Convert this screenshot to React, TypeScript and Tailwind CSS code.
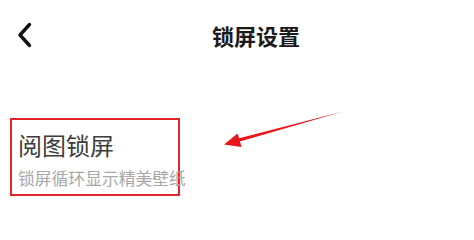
import React from "react";

const font = { fontFamily: '"Noto Sans CJK SC", "Noto Sans", sans-serif' };

const App: React.FC = () => {
  return (
    <div className="relative w-[474px] h-[240px] bg-white overflow-hidden" style={font}>
      {/* header */}
      <div className="flex items-center h-[70px]">
        <svg className="ml-[17px]" width="15" height="26" viewBox="0 0 15 26" fill="none">
          <path d="M12.5 2.5 L3 13 L12.5 23.5" stroke="#111" strokeWidth="3.4" strokeLinecap="round" strokeLinejoin="round" />
        </svg>
        <div className="ml-[180px] text-[22px] leading-none font-bold text-[#1a1a1a]">锁屏设置</div>
      </div>

      {/* item with red highlight */}
      <div className="mt-[48px] ml-[10px] w-[170px] h-[78px] border-2 border-[#e3262b] pl-[6px] pt-[13px]">
        <div className="text-[24px] leading-none text-[#3d3d3d] whitespace-nowrap">阅图锁屏</div>
        <div className="mt-[13px] text-[16.8px] leading-none text-[#a8a8a8] whitespace-nowrap">锁屏循环显示精美壁纸</div>
      </div>

      {/* annotation arrow */}
      <svg className="absolute left-0 top-0" width="474" height="240" viewBox="0 0 474 240">
        <polygon
          points="224,144.5 237.5,133.5 239.2,138.2 343,111.5 240,141.4 241.5,147"
          fill="#e8161b"
        />
      </svg>
    </div>
  );
};

export default App;
